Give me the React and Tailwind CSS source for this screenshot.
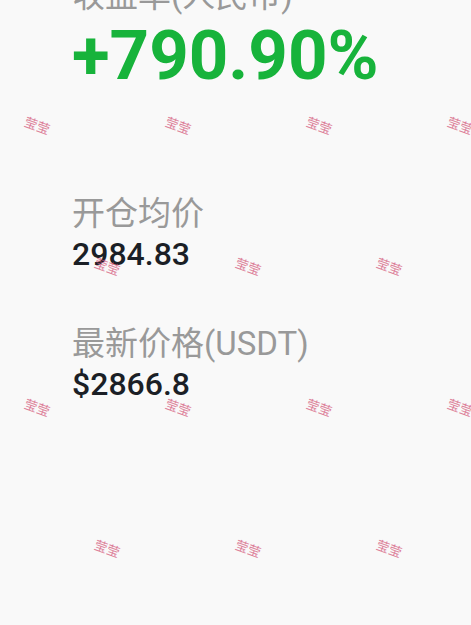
import React from "react";

const rows = [
  { y: 126, xs: [37, 178, 319, 460] },
  { y: 267, xs: [107, 248, 389] },
  { y: 408, xs: [37, 178, 319, 460] },
  { y: 549, xs: [107, 248, 389] },
];

function Watermarks() {
  const marks = [];
  rows.forEach((r, i) =>
    r.xs.forEach((x, j) =>
      marks.push(
        <span
          key={`${i}-${j}`}
          className="absolute text-[13px] leading-[13px] text-[#d4587a] opacity-75 whitespace-nowrap rotate-[20deg] -translate-x-1/2 -translate-y-1/2"
          style={{ left: x, top: r.y }}
        >
          莹莹
        </span>
      )
    )
  );
  return <div className="pointer-events-none absolute inset-0">{marks}</div>;
}

export default function App() {
  return (
    <div
      className="relative h-[625px] w-full overflow-hidden bg-[#f9f9f9] pl-[72px]"
      style={{ fontFamily: "Roboto, 'Noto Sans CJK SC', sans-serif" }}
    >
      <div className="flex flex-col -mt-[24px]">
        <div className="text-[33px] leading-[40px] text-[#999999] whitespace-nowrap">
          收益率(人民币)
        </div>
        <div className="text-[69px] leading-[80px] font-bold text-[#17b33b] whitespace-nowrap">
          +790.90%
        </div>
        <div className="mt-[98px] text-[33px] leading-[40px] text-[#999999] whitespace-nowrap">
          开仓均价
        </div>
        <div className="text-[32px] leading-[40px] font-medium text-[#1b1f26]">
          2984.83
        </div>
        <div className="mt-[50px] text-[33px] leading-[40px] text-[#999999] whitespace-nowrap">
          最新价格(USDT)
        </div>
        <div className="text-[32px] leading-[40px] font-medium text-[#1b1f26]">
          $2866.8
        </div>
      </div>
      <Watermarks />
    </div>
  );
}
